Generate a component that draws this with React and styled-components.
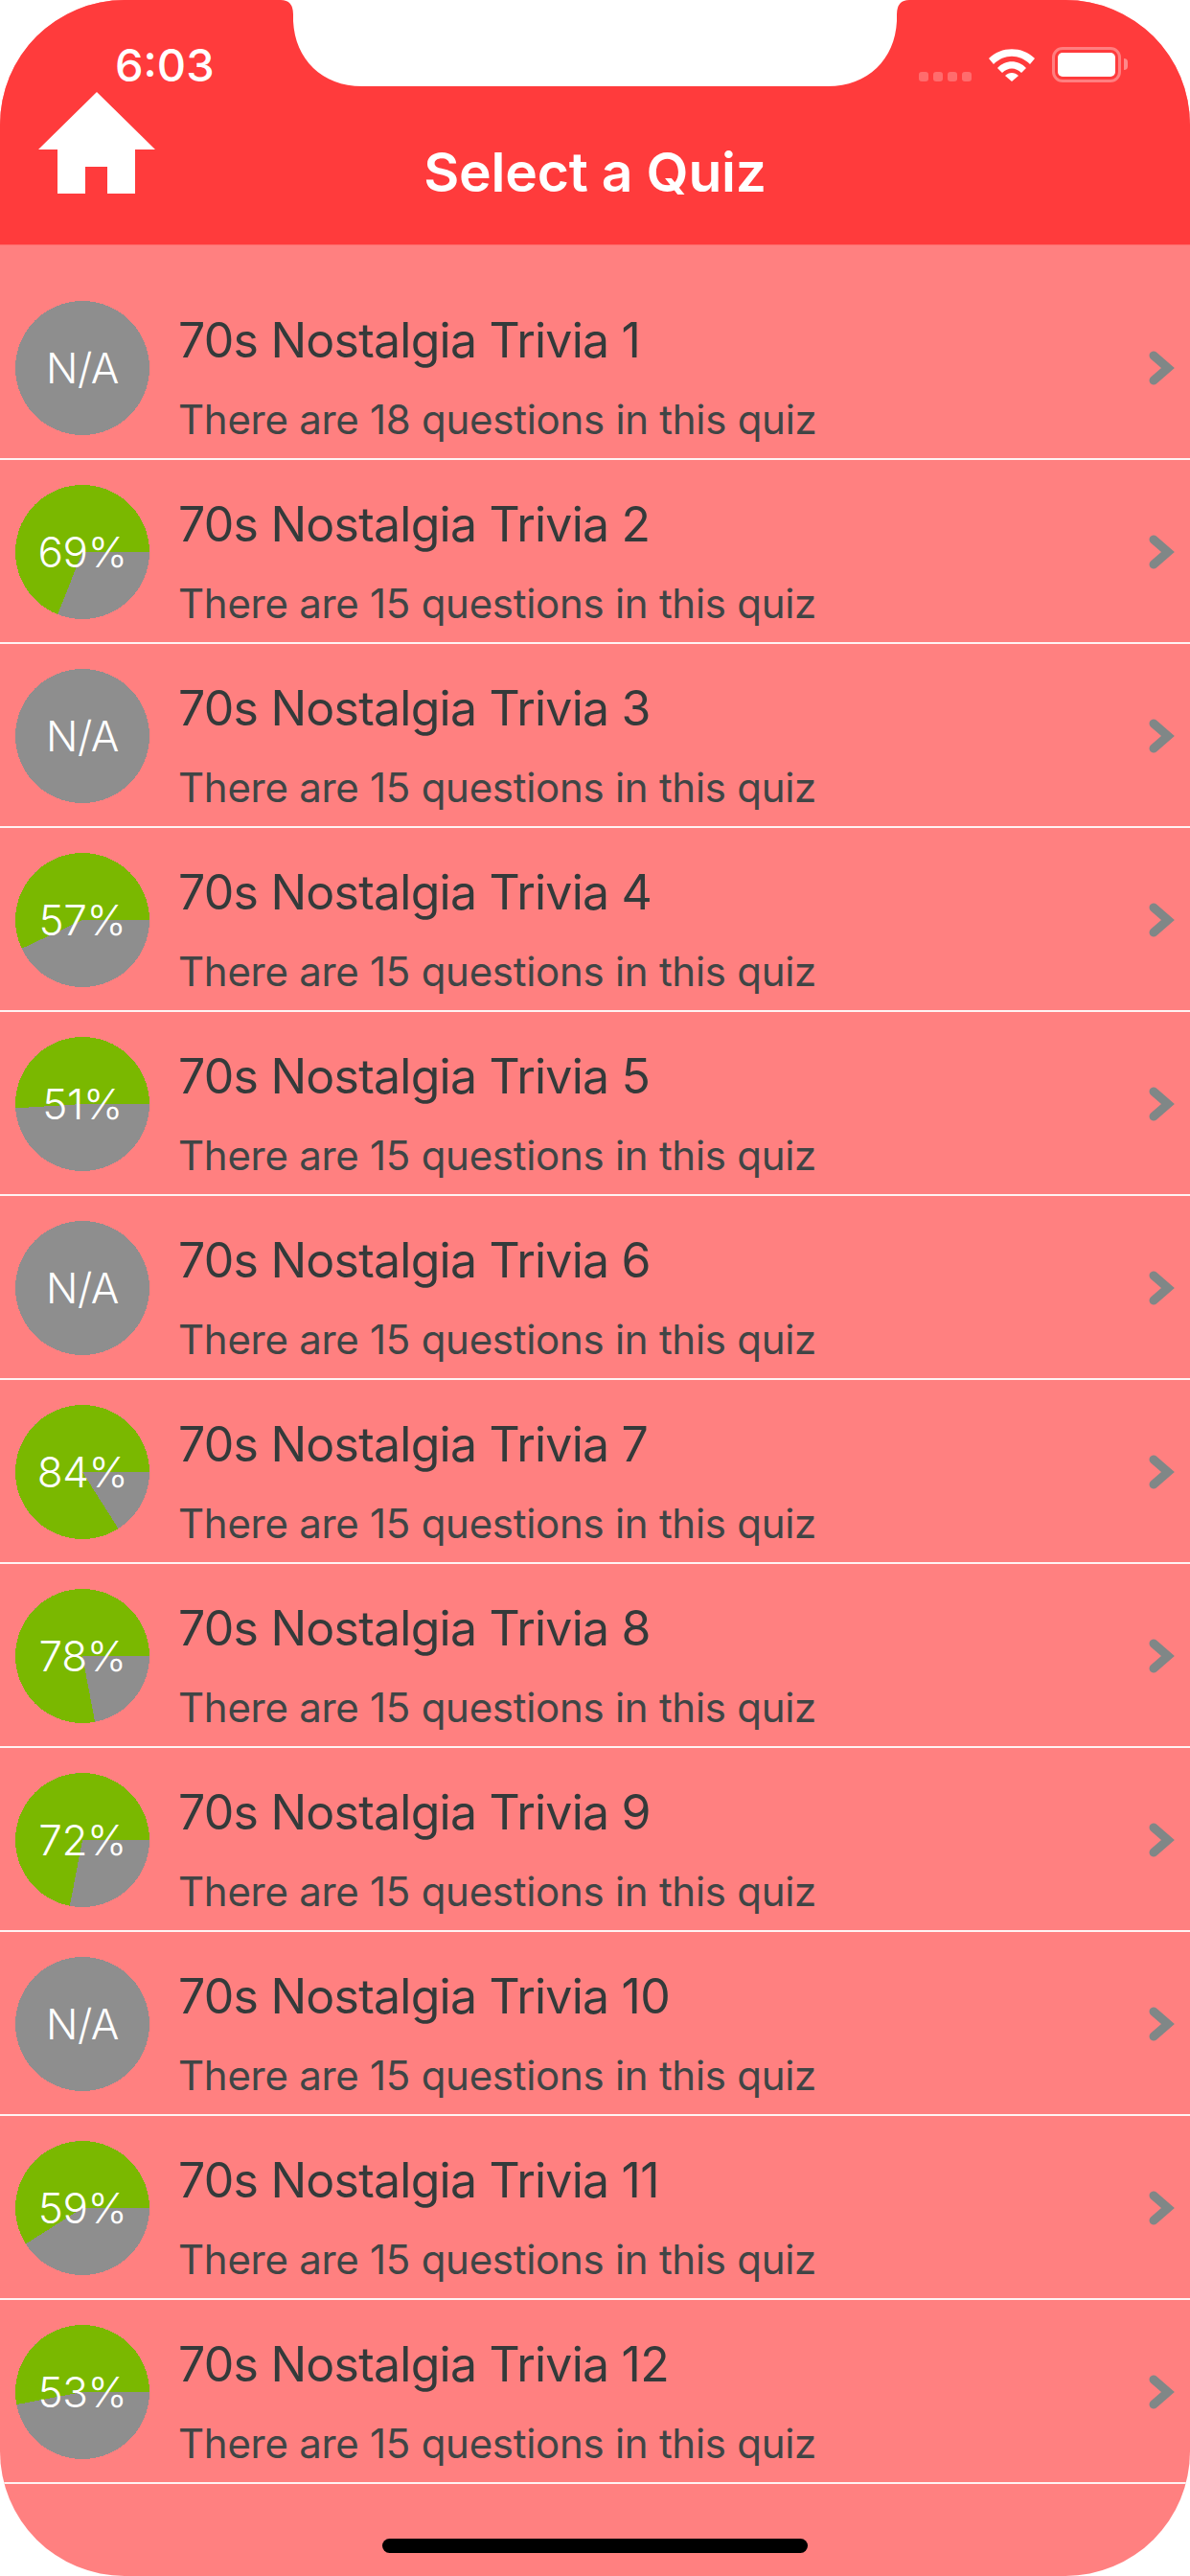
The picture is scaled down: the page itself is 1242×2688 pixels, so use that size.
import React from "react";
import styled, { createGlobalStyle } from "styled-components";

const quizzes = [
  { id: 1, questions: 18 },
  { id: 2, questions: 15, score: 69 },
  { id: 3, questions: 15 },
  { id: 4, questions: 15, score: 57 },
  { id: 5, questions: 15, score: 51 },
  { id: 6, questions: 15 },
  { id: 7, questions: 15, score: 84 },
  { id: 8, questions: 15, score: 78 },
  { id: 9, questions: 15, score: 72 },
  { id: 10, questions: 15 },
  { id: 11, questions: 15, score: 59 },
  { id: 12, questions: 15, score: 53 },
];

// the green slice starts at 3 o'clock and runs counter-clockwise
const slicePath = (score) => {
  const angle = (score / 100) * Math.PI * 2;
  const x = 70 + 70 * Math.cos(angle);
  const y = 70 - 70 * Math.sin(angle);
  return `M70 70 L140 70 A70 70 0 ${score > 50 ? 1 : 0} 0 ${x} ${y} Z`;
};

function ScorePie({ score }) {
  const hasScore = score !== undefined;
  return (
    <Pie>
      <svg width="140" height="140" viewBox="0 0 140 140" shapeRendering="crispEdges">
        <circle cx="70" cy="70" r="70" fill="#8e8e8e" />
        {hasScore && <path d={slicePath(score)} fill="#7ab800" />}
      </svg>
      <PieLabel>{hasScore ? `${score}%` : "N/A"}</PieLabel>
    </Pie>
  );
}

function QuizRow({ id, questions, score }) {
  return (
    <Row>
      <ScorePie score={score} />
      <RowText>
        <Title>70s Nostalgia Trivia {id}</Title>
        <Subtitle>There are {questions} questions in this quiz</Subtitle>
      </RowText>
      <Chevron width="28" height="40" viewBox="0 0 28 40">
        <path d="M5 7 L20 20 L5 33" fill="none" stroke="#808787" strokeWidth="9" strokeLinejoin="miter" strokeLinecap="round" />
      </Chevron>
    </Row>
  );
}

export default function App() {
  return (
    <Screen>
      <GlobalStyle />
      <Header>
        <StatusBar>
          <Clock>6:03</Clock>
          <StatusIcons>
            <Signal>
              <Dot />
              <Dot />
              <Dot />
              <Dot />
            </Signal>
            <svg width="50" height="36" viewBox="0 0 50 36">
              <path d="M1 12 C14 -1 36 -1 49 12 L44 18 C33 7 17 7 6 18 Z" fill="#fff" />
              <path d="M10 22 C18 13 32 13 40 22 L35 27 C29 21 21 21 15 27 Z" fill="#fff" />
              <path d="M18 30 C22 26 28 26 32 30 L25 36 Z" fill="#fff" />
            </svg>
            <Battery>
              <BatteryFill />
            </Battery>
            <BatteryCap />
          </StatusIcons>
        </StatusBar>
        <NavBar>
          <svg width="122" height="106" viewBox="0 0 122 106">
            <path d="M61 0 L122 60 L101 60 L101 106 L72 106 L72 78 L49 78 L49 106 L20 106 L20 60 L0 60 Z" fill="#fff" />
          </svg>
          <NavTitle>Select a Quiz</NavTitle>
        </NavBar>
      </Header>
      <List>
        {quizzes.map((quiz) => (
          <QuizRow key={quiz.id} {...quiz} />
        ))}
      </List>
      <Footer>
        <HomeIndicator />
      </Footer>
      <Notch width="1242" height="92" viewBox="0 0 1242 92">
        <path d="M293 0 Q306 0 306 15 L306 22 C308 62 336 90 378 90 L864 90 C906 90 934 62 936 22 L936 15 Q936 0 949 0 Z" fill="#fff" />
      </Notch>
    </Screen>
  );
}

const GlobalStyle = createGlobalStyle`
  body {
    margin: 0;
    background: #fff;
    font-family: Inter, "Liberation Sans", sans-serif;
  }
`;

const Screen = styled.div`
  position: relative;
  width: 1242px;
  height: 2688px;
  overflow: hidden;
  display: flex;
  flex-direction: column;
  background: #ff8080;
  border-radius: 130px;
`;

const Notch = styled.svg`
  position: absolute;
  top: 0;
  left: 0;
`;

const Header = styled.header`
  height: 256px;
  box-sizing: border-box;
  background: #ff3b3c;
  border-bottom: 1px solid #ff6a6a;
`;

const StatusBar = styled.div`
  height: 96px;
  box-sizing: border-box;
  padding: 40px 65px 0 120px;
  display: flex;
  justify-content: space-between;
  align-items: flex-start;
`;

const Clock = styled.span`
  font-size: 47px;
  line-height: 56px;
  font-weight: 500;
  color: #fff;
`;

const StatusIcons = styled.div`
  display: flex;
  align-items: flex-start;
  padding-top: 9px;

  svg {
    margin-left: 17px;
  }
`;

const Signal = styled.div`
  display: flex;
  gap: 5px;
  padding-top: 26px;
`;

const Dot = styled.span`
  width: 10px;
  height: 10px;
  border-radius: 3px;
  background: rgba(255, 255, 255, 0.25);
`;

const Battery = styled.div`
  width: 72px;
  height: 37px;
  box-sizing: border-box;
  margin-left: 17px;
  padding: 3px;
  border: 3px solid rgba(255, 255, 255, 0.35);
  border-radius: 11px;
`;

const BatteryFill = styled.div`
  height: 100%;
  background: #fff;
  border-radius: 5px;
`;

const BatteryCap = styled.span`
  width: 4px;
  height: 12px;
  margin: 12px 0 0 3px;
  background: rgba(255, 255, 255, 0.4);
  border-radius: 0 4px 4px 0;
`;

const NavBar = styled.nav`
  position: relative;
  display: flex;
  justify-content: center;

  svg {
    position: absolute;
    left: 40px;
    top: 0;
  }
`;

const NavTitle = styled.h1`
  margin: 52px 0 0;
  font-size: 57px;
  line-height: 64px;
  font-weight: 600;
  letter-spacing: -0.2px;
  color: #fff;
`;

const List = styled.main`
  padding-top: 32px;
`;

const Row = styled.div`
  height: 192px;
  box-sizing: border-box;
  padding: 2px 15px 0 16px;
  display: flex;
  align-items: center;
  border-bottom: 2px solid rgba(255, 255, 255, 0.9);
`;

const Pie = styled.div`
  position: relative;
  flex: none;
  width: 140px;
  height: 140px;

  svg {
    display: block;
  }
`;

const PieLabel = styled.span`
  position: absolute;
  inset: 0;
  display: flex;
  align-items: center;
  justify-content: center;
  font-size: 44px;
  font-weight: 300;
  letter-spacing: -0.4px;
  color: #fff;
`;

const RowText = styled.div`
  flex: 1;
  margin-left: 30px;
  padding-top: 19px;
  display: flex;
  flex-direction: column;
`;

const Title = styled.div`
  font-size: 50px;
  line-height: 60px;
  letter-spacing: -0.77px;
  color: #343a3a;
`;

const Subtitle = styled.div`
  margin-top: 28px;
  font-size: 42px;
  line-height: 50px;
  letter-spacing: -0.28px;
  color: #404545;
`;

const Chevron = styled.svg`
  flex: none;
`;

const Footer = styled.footer`
  flex: 1;
  display: flex;
  justify-content: center;
  padding-top: 57px;
`;

const HomeIndicator = styled.div`
  width: 444px;
  height: 15px;
  background: #000;
  border-radius: 8px;
`;
